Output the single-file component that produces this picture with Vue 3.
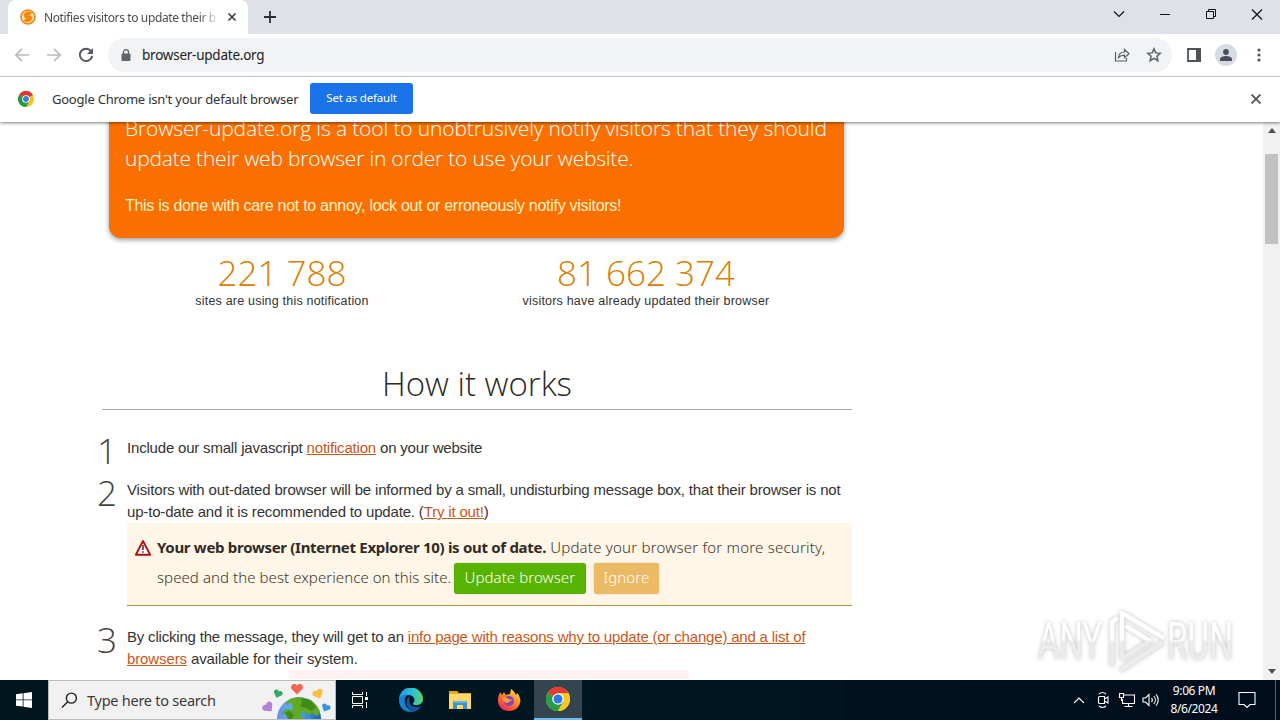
<template>
  <div class="screen">
    <header class="tabstrip">
      <div class="tab">
        <svg class="favicon" viewBox="0 0 16 16">
          <circle cx="8" cy="8" r="7" fill="#ffe9c2" stroke="#f28a1c" stroke-width="1.7" />
          <path d="M11.500 3.800L10 5.600H7.500l-.6 1 3.600.3 1.500 1.800-1.500 3-3.300.9-3-.8L5.700 10h2.700l.5-.8-3.600-.4L4 6.500l1.400-2.700 2.700-.9z" fill="#fb8200" stroke="#fb8200" stroke-width="1" />
        </svg>
        <span class="tab-title">Notifies visitors to update their b</span>
        <svg class="tab-close" viewBox="0 0 10 10"><path d="M1.500 1.500l7 7M8.500 1.500l-7 7" stroke="#3c4043" stroke-width="1.700" /></svg>
      </div>
      <svg class="new-tab" viewBox="0 0 12 12"><path d="M6 0v12M0 6h12" stroke="#2c2f33" stroke-width="1.800" /></svg>
      <div class="window-controls">
        <svg viewBox="0 0 46 28"><path d="M18 11.500l5 5 5-5" /></svg>
        <svg viewBox="0 0 46 28"><path d="M18 14.500h10" /></svg>
        <svg viewBox="0 0 46 28"><path d="M18.500 11.500h7v7h-7zM20.500 11.500v-2h7v7h-2" /></svg>
        <svg viewBox="0 0 46 28"><path d="M18 9.500l10 10M28 9.500l-10 10" /></svg>
      </div>
    </header>

    <div class="toolbar">
      <svg class="nav" viewBox="0 0 16 16"><path d="M15 8H2M8 1.800L1.800 8 8 14.200" stroke="#babcbe" /></svg>
      <svg class="nav" viewBox="0 0 16 16"><path d="M1 8h13M8 1.800L14.200 8 8 14.200" stroke="#babcbe" /></svg>
      <svg class="nav" viewBox="0 0 16 16"><path d="M13.300 4.500A6.200 6.200 0 1 0 14.200 9" stroke="#55585c" stroke-width="2" /><path d="M15 1v6H9z" fill="#55585c" /></svg>
      <div class="omnibox">
        <svg class="lock" viewBox="0 0 10 12"><path d="M2.500 5V3.200a2.500 2.500 0 0 1 5 0V5" fill="none" stroke="#5f6368" stroke-width="1.300" /><rect x="0.500" y="4.500" width="9" height="7.500" rx="1" fill="#5f6368" /></svg>
        <span class="url">browser-update.org</span>
        <svg class="share" viewBox="0 0 16 16"><path d="M1.500 5v9h11v-3M4.500 10.500c.3-3.500 2.500-5.500 6-5.500V2.500L15 6.700l-4.500 4V8.200c-2.700 0-4.500.6-6 2.300z" /></svg>
        <svg class="star" viewBox="0 0 16 16"><path d="M8 1.800l1.800 4.100 4.500.4-3.400 3 1 4.400L8 11.400l-3.900 2.300 1-4.400-3.400-3 4.500-.4z" /></svg>
      </div>
      <svg class="side-panel" viewBox="0 0 14 14"><path d="M1 1h12v12H1z" fill="none" stroke="#505458" stroke-width="1.800" /><path d="M9 0h5v14H9z" fill="#505458" /></svg>
      <span class="profile">
        <svg viewBox="0 0 12 12"><circle cx="6" cy="3" r="2.900" /><path d="M0 12v-2c0-2 3.500-3 6-3s6 1 6 3v2z" /></svg>
      </span>
      <svg class="more" viewBox="0 0 4 14"><circle cx="2" cy="2" r="1.600" /><circle cx="2" cy="7" r="1.600" /><circle cx="2" cy="12" r="1.600" /></svg>
    </div>

    <div class="infobar">
      <svg class="chrome-small" viewBox="0 0 24 24">
        <circle cx="12" cy="12" r="12" fill="#fbc116" />
        <path d="M12 12L1.600 6A12 12 0 0 1 22.400 6z" fill="#d93b30" />
        <path d="M1.600 6A12 12 0 0 0 12 24l5.200-9L12 12z" fill="#229b48" />
        <circle cx="12" cy="12" r="5.800" fill="#fff" /><circle cx="12" cy="12" r="4.400" fill="#3b7de9" />
      </svg>
      <span class="infobar-text">Google Chrome isn't your default browser</span>
      <button class="default-button">Set as default</button>
      <svg class="infobar-close" viewBox="0 0 10 10"><path d="M.5.5l9 9M9.500.5l-9 9" stroke="#505458" stroke-width="1.800" /></svg>
    </div>

    <div class="viewport">
      <main class="page">
        <section class="hero">
          <p class="lead">
            <span class="lead-first">Browser-update.org is a tool to unobtrusively notify visitors that they should</span><br>
            <span class="lead-second">update their web browser in order to use your website.</span>
          </p>
          <p class="care">This is done with care not to annoy, lock out or erroneously notify visitors!</p>
        </section>

        <section class="stats">
          <div v-for="stat in stats" :key="stat.label" class="stat">
            <div class="stat-number">{{ stat.value }}</div>
            <div class="stat-label">{{ stat.label }}</div>
          </div>
        </section>

        <h2>How it works</h2>

        <ol class="steps">
          <li class="step-one">
            <span class="step-number">1</span>
            <div class="s1">Include our small javascript <a>notification</a> on your website</div>
          </li>
          <li class="step-two">
            <span class="step-number">2</span>
            <div>
              <span class="s2">Visitors with out-dated browser will be informed by a small, undisturbing message box, that their browser is not</span><br>
              <span class="s2">up-to-date and it is recommended to update. (<a>Try it out!</a>)</span>
              <div class="notice">
                <svg class="warning" viewBox="0 0 16 16"><path d="M8 1L15.200 14.700H.8z" fill="#fff" stroke="#b80d0d" stroke-width="1.900" stroke-linejoin="round" /><path d="M8 5v5M8 11.200v1.600" stroke="#333" stroke-width="1.500" /></svg>
                <div class="notice-text">
                  <div class="notice-line"><b>Your web browser (Internet Explorer 10) is out of date.</b><span class="n1"> Update your browser for more security,</span></div>
                  <div class="notice-line"><span class="n2">speed and the best experience on this site.</span><button class="update">Update browser</button><button class="ignore">Ignore</button></div>
                </div>
              </div>
            </div>
          </li>
          <li class="step-three">
            <span class="step-number">3</span>
            <div>
              <span class="s3a">By clicking the message, they will get to an <a>info page with reasons why to update (or change) and a list of</a></span><br>
              <span class="s3b"><a>browsers</a> available for their system.</span>
              <div class="preview"></div>
            </div>
          </li>
        </ol>
      </main>
      <div class="scrollbar">
        <svg viewBox="0 0 8 5"><path d="M0 5l4-5 4 5z" /></svg>
        <div class="thumb"></div>
        <svg viewBox="0 0 8 5"><path d="M0 0l4 5 4-5z" /></svg>
      </div>
      <svg class="watermark" viewBox="0 0 210 76">
        <defs>
          <linearGradient id="fade" gradientUnits="userSpaceOnUse" x1="0" y1="10" x2="0" y2="68">
            <stop offset="0" stop-color="#fff" />
            <stop offset=".48" stop-color="#fdfdfd" />
            <stop offset=".52" stop-color="#ebebeb" />
            <stop offset="1" stop-color="#ececec" />
          </linearGradient>
        </defs>
        <g class="mark">
          <text x="8" y="57" textLength="64" lengthAdjust="spacingAndGlyphs">ANY</text>
          <text x="137" y="57" textLength="66" lengthAdjust="spacingAndGlyphs">RUN</text>
          <path d="M82 62V20l4-3M92 54V11l40 24M92 67l40-26M93 56l27-17-23-14" />
        </g>
      </svg>
    </div>

    <footer class="taskbar">
      <div class="start">
        <svg viewBox="0 0 16 16"><path d="M0 2.300L6.700 1.300v6.200H0zM7.500 1.200L16 0v7.500H7.500zM0 8.300h6.700v6.300L0 13.700zM7.500 8.300H16V16l-8.500-1.300z" fill="#fff" /></svg>
      </div>
      <div class="search">
        <svg class="magnifier" viewBox="0 0 18 18"><circle cx="11" cy="6.500" r="5.300" /><path d="M7.200 10.300L1 16.500" /></svg>
        <span>Type here to search</span>
        <svg class="earth" viewBox="0 0 72 38">
          <defs>
            <linearGradient id="sea" x1="0" x2="1"><stop offset="0" stop-color="#6a8ff0" /><stop offset=".4" stop-color="#5db4ee" /><stop offset="1" stop-color="#1763b5" /></linearGradient>
          </defs>
          <circle cx="38" cy="38" r="22" fill="url(#sea)" />
          <path d="M25 22l4-4 8-2 5 1 8 2 6 6 3 8-3 2-5-3-4 2-5-4-3 4 4 4H28l-3-5-5 1c1-3 3-5 6-6l5 1 1-4-3-3-4 2z" fill="#62a925" />
          <path d="M40 17l9 2 6 7-4 4-6-3-6-2 2-4zM24 31l5-1 4 4-2 4h-4z" fill="#3f8c19" />
          <path transform="translate(36 7.500)" d="M0 6L-5.500.5C-7.500-3-2.500-6.500 0-2.800 2.500-6.500 7.500-3 5.500.5z" fill="#ed684e" />
          <path transform="translate(17 12.500) rotate(20) scale(.75)" d="M0 6L-5.500.5C-7.500-3-2.500-6.500 0-2.800 2.500-6.500 7.500-3 5.500.5z" fill="#32aa61" />
          <path transform="translate(57 12.500) rotate(-25) scale(.9)" d="M0 6L-5.500.5C-7.500-3-2.500-6.500 0-2.800 2.500-6.500 7.500-3 5.500.5z" fill="#fbbd3c" />
          <path transform="translate(7 26) rotate(-40) scale(.95)" d="M0 6L-5.500.5C-7.500-3-2.500-6.500 0-2.800 2.500-6.500 7.500-3 5.500.5z" fill="#ae84d3" />
          <path transform="translate(65 26.500) rotate(25) scale(.75)" d="M0 6L-5.500.5C-7.500-3-2.500-6.500 0-2.800 2.500-6.500 7.500-3 5.500.5z" fill="#3495dc" />
        </svg>
      </div>
      <div class="apps">
        <div class="app">
          <svg class="task-view" viewBox="0 0 18 18"><path d="M1.500 1v2.500h10V1M1.500 17v-2.500h10V17M1.500 5.500h10v7h-10zM15.500 1v4M15.500 11v6" /><path d="M14 6h3v3h-3z" class="solid" /></svg>
        </div>
        <div class="app">
          <svg viewBox="0 0 24 24">
            <defs><linearGradient id="edge" x1="0" x2="1"><stop offset="0" stop-color="#1d9ce5" /><stop offset=".6" stop-color="#2bc3d2" /><stop offset="1" stop-color="#63d65c" /></linearGradient></defs>
            <path d="M0 12A12 12 0 0 1 24 11c0 4-3 6-7 6-3 0-4-1-2-3 2-4-2-7-6-7-5 0-8 3-9 5z" fill="url(#edge)" />
            <path d="M0 12c1-4 5-6 9-5-4 2-4 7-2 11 2 3 6 6 9 5C8 26 0 21 0 12z" fill="#1383d8" />
            <path d="M9.500 9C5 14 9 22 15 23.500c3-.5 6-3 7.500-5.500-6 3-13 0-12-6 .1-1 .3-2-1-3z" fill="#0c59a4" />
          </svg>
        </div>
        <div class="app">
          <svg viewBox="0 0 24 24"><path d="M1 3h8l2 2h12v16H1z" fill="#e8a823" /><path d="M1 6h22v15H1z" fill="#ffd86b" /><path d="M5 13h14v8h-4v-4H9v4H5z" fill="#3b93d3" /><path d="M5 13h14v2H5z" fill="#64b4e8" /></svg>
        </div>
        <div class="app">
          <svg viewBox="0 0 24 24">
            <defs><linearGradient id="fox" x1=".9" y1="0" x2=".2" y2="1"><stop offset="0" stop-color="#ffe64a" /><stop offset=".45" stop-color="#ff8b20" /><stop offset="1" stop-color="#f2205e" /></linearGradient></defs>
            <path d="M2 7l1-3 2 3 2-3 2 3c2-1 3-1 4-1l1-5c3 2 4 4 5 6l1-2c3 3 4 7 3 10-1 5-6 8-11 8C5 23 1 18 1 13c0-2 0-4 1-6z" fill="url(#fox)" />
            <circle cx="12" cy="13" r="5" fill="#7944ce" /><path d="M5 10c3-1 5 0 7 1l4 1c-2 1-4 1-5 3-3 0-5-2-6-5z" fill="#ff9b24" />
          </svg>
        </div>
        <div class="app active">
          <svg viewBox="0 0 24 24">
            <circle cx="12" cy="12" r="12" fill="#fcc626" />
            <path d="M12 12L1.600 6A12 12 0 0 1 22.400 6z" fill="#e33b2e" />
            <path d="M1.600 6A12 12 0 0 0 12 24l5.200-9L12 12z" fill="#299c4b" />
            <path d="M12 6h10.400A12 12 0 0 1 12 24l5.200-9z" fill="#fcc626" />
            <circle cx="12" cy="12" r="5.800" fill="#fff" /><circle cx="12" cy="12" r="4.500" fill="#2e7ae5" />
          </svg>
        </div>
      </div>
      <div class="tray">
        <svg class="caret" viewBox="0 0 12 7"><path d="M1 6l5-5 5 5" /></svg>
        <svg class="camera" viewBox="0 0 14 18"><path d="M3.500 5.500h5v7h-5a1 1 0 0 1-1-1v-5a1 1 0 0 1 1-1zM8.500 8l3.500-2v6l-3.500-2M3 3a5.500 5.500 0 0 1 7 0M3 15a5.500 5.500 0 0 0 7 0" /></svg>
        <svg class="network" viewBox="0 0 18 16"><path d="M6 3h10.500v8.500h-12V7M10.500 11.500V14M6.500 14.500h8M1.500 1.500h4v4h-4zM3.500 5.500V9" /></svg>
        <svg class="volume" viewBox="0 0 18 14"><path d="M1 5h2.500L7 1.500v11L3.500 9H1zM9.500 5a3 3 0 0 1 0 4M11.800 3a6 6 0 0 1 0 8M14 1.300a8.500 8.500 0 0 1 0 11.400" /></svg>
        <div class="clock"><div>9:06 PM</div><div>8/6/2024</div></div>
        <svg class="action" viewBox="0 0 18 18"><path d="M1 1.500h16v12h-5l-3 3-3-3H1z" /></svg>
        <span class="peek"></span>
      </div>
    </footer>
  </div>
</template>

<script setup>
const stats = [
  { value: '221 788', label: 'sites are using this notification' },
  { value: '81 662 374', label: 'visitors have already updated their browser' }
]
</script>

<style>
body {
  margin: 0;
  overflow: hidden;
}
</style>

<style scoped>
.screen {
  width: 1280px;
  height: 720px;
  display: flex;
  flex-direction: column;
  overflow: hidden;
  background: #fff;
  font-family: "Noto Sans", "Open Sans", sans-serif;
  white-space: nowrap;
}

.screen * {
  box-sizing: border-box;
}

svg {
  flex: none;
  display: block;
}

button {
  border: 0;
  padding: 0;
  font-family: inherit;
}

/* Browser chrome */
.tabstrip {
  height: 34px;
  flex: none;
  display: flex;
  background: #dee1e8;
}

.tab {
  width: 240px;
  height: 34px;
  margin-left: 8px;
  padding: 0 11px 0 12px;
  display: flex;
  align-items: center;
  background: #fff;
  border-radius: 8px 8px 0 0;
}

.favicon {
  width: 16px;
  height: 16px;
}

.tab-title {
  width: 172px;
  margin-left: 8px;
  overflow: hidden;
  color: #4a4d52;
  font-size: 12px;
  letter-spacing: -0.38px;
  mask-image: linear-gradient(90deg, #000 155px, transparent 176px);
}

.tab-close {
  width: 10px;
  height: 10px;
  margin-left: 11px;
}

.new-tab {
  width: 12px;
  height: 12px;
  margin: 11px 0 0 16px;
}

.window-controls {
  display: flex;
  margin-left: auto;
}

.window-controls svg {
  width: 46px;
  height: 28px;
  fill: none;
  stroke: #111;
}

.window-controls svg:first-child,
.window-controls svg:last-child {
  stroke-width: 1.2;
}

.toolbar {
  height: 43px;
  flex: none;
  display: flex;
  align-items: center;
  padding: 0 19.5px 0 14px;
  border-bottom: 1px solid #d9dadc;
}

.nav {
  width: 16px;
  height: 16px;
  margin-right: 16px;
  fill: none;
  stroke-width: 1.7;
}

.omnibox {
  width: 1064px;
  height: 34px;
  margin-left: -2px;
  padding: 0 10px 0 13px;
  display: flex;
  align-items: center;
  border-radius: 17px;
  background: #f1f3f4;
}

.lock {
  width: 10px;
  height: 12px;
}

.url {
  margin-left: 11px;
  color: #202124;
  font-size: 13.5px;
  letter-spacing: -0.24px;
}

.share,
.star {
  width: 16px;
  height: 16px;
  fill: none;
  stroke: #5b5f64;
  stroke-width: 1.2;
}

.share {
  margin-left: auto;
}

.star {
  margin-left: 16px;
  stroke-width: 1.5;
}

.side-panel {
  width: 14px;
  height: 14px;
  margin-left: 15px;
}

.profile {
  width: 22px;
  height: 22px;
  margin-left: 14px;
  display: grid;
  place-items: center;
  border-radius: 50%;
  background: #d8dce5;
}

.profile svg {
  width: 12px;
  height: 12px;
  fill: #4a4e5c;
}

.more {
  width: 4px;
  height: 14px;
  margin-left: auto;
  fill: #4d5156;
}

.infobar {
  height: 45px;
  flex: none;
  display: flex;
  align-items: center;
  padding: 0 19px 2px 18px;
  position: relative;
  z-index: 2;
  background: #fff;
  box-shadow: 0 1px 3px rgba(0, 0, 0, 0.5);
}

.chrome-small {
  width: 16px;
  height: 16px;
}

.infobar-text {
  width: 246px;
  margin-left: 18px;
  color: #303236;
  font-size: 13px;
  letter-spacing: -0.23px;
}

.default-button {
  width: 103px;
  height: 31px;
  margin-left: 12px;
  padding-bottom: 2px;
  border-radius: 3px;
  background: #1a73e8;
  color: #fff;
  font-size: 11.5px;
  letter-spacing: -0.2px;
}

.infobar-close {
  width: 10px;
  height: 10px;
  margin-left: auto;
}

/* Web page */
.viewport {
  height: 558px;
  flex: none;
  display: flex;
  position: relative;
  overflow: hidden;
}

.page {
  width: 1263px;
  padding-left: 102px;
  color: #333;
  font-family: "Liberation Sans", Arial, sans-serif;
}

.hero {
  width: 735px;
  height: 136px;
  margin: -20px 0 0 7px;
  padding: 11px 16px 0;
  border-radius: 0 0 12px 12px;
  background: #fa7000;
  box-shadow: 0 2px 5px rgba(0, 0, 0, 0.4);
  color: #fff;
}

.lead {
  margin: 0;
  font: 350 21px/30px "Open Sans", sans-serif;
}

.lead-first {
  letter-spacing: -0.14px;
}

.lead-second {
  letter-spacing: -0.21px;
}

.care {
  margin: 22px 0 0;
  color: #fff0c8;
  font-size: 16px;
  line-height: 22px;
  letter-spacing: -0.285px;
}

.stats {
  display: flex;
  margin-left: -2px;
  padding-top: 11px;
  text-align: center;
}

.stat {
  width: 364px;
}

.stat-number {
  height: 44px;
  color: #d98000;
  font: 300 35px/48px "Open Sans", sans-serif;
}

.stat-label {
  color: #333;
  font-size: 12.5px;
  line-height: 16px;
  letter-spacing: 0.2px;
}

h2 {
  width: 750px;
  height: 50px;
  margin: 51px 0 0;
  border-bottom: 1px solid #aaa;
  color: #2b2b2b;
  font: 300 33px/47px "Open Sans", sans-serif;
  text-align: center;
}

.steps {
  margin: 27px 0 0 -5px;
  padding: 0;
  list-style: none;
  font-size: 15px;
  line-height: 22px;
}

.steps li {
  display: flex;
}

.steps a {
  color: #c7581a;
  text-decoration: underline;
}

.step-number {
  width: 30px;
  height: 22px;
  flex: none;
  color: #444;
  font: 300 35px/28px "Open Sans", sans-serif;
}

.step-one {
  height: 42px;
}

.s1,
.s3a {
  letter-spacing: -0.19px;
}

.s2 {
  letter-spacing: -0.17px;
}

.s3b {
  letter-spacing: -0.12px;
}

.notice {
  width: 725px;
  height: 83px;
  display: flex;
  padding: 9px 0 0 8px;
  border-bottom: 1px solid #a5983f;
  background: #fff6e7;
  color: #3c352b;
  font-family: "Noto Sans", sans-serif;
  font-size: 15px;
}

.warning {
  width: 16px;
  height: 16px;
  margin: 8px 6px 0 0;
}

.notice-line {
  height: 30px;
  display: flex;
  align-items: center;
  white-space: pre;
}

.notice b {
  color: #302b26;
  letter-spacing: -0.3px;
}

.n1,
.n2 {
  font-weight: 300;
}

.n1 {
  letter-spacing: 0.21px;
}

.n2 {
  letter-spacing: 0.07px;
}

.notice button {
  height: 31px;
  margin: 2px 0 0 3px;
  padding: 0 1px 2px 0;
  border-radius: 3px;
  box-shadow: 0 0 2px rgba(0, 0, 0, 0.2);
  color: #fff;
  font-size: 15px;
  font-weight: 300;
  letter-spacing: 0.08px;
}

.notice .update {
  width: 132px;
  background: #57b300;
}

.notice .ignore {
  width: 65px;
  margin-left: 8px;
  background: #ecb964;
}

.step-three {
  padding-top: 20px;
}

.preview {
  width: 400px;
  height: 9px;
  margin: 0 0 0 162px;
  background: #fff2f0;
}

.scrollbar {
  width: 17px;
  display: flex;
  flex-direction: column;
  align-items: center;
  padding: 6px 0;
  background: #f1f1f1;
}

.scrollbar svg {
  width: 8px;
  height: 5px;
  fill: #505050;
}

.thumb {
  width: 13px;
  height: 90px;
  margin: 21px 0 auto;
  background: #c1c1c1;
}

.watermark {
  position: absolute;
  left: 1030px;
  top: 480px;
  width: 210px;
  height: 76px;
}

.mark {
  filter: drop-shadow(0 0 2px rgba(0, 0, 0, 0.25));
}

.mark text {
  fill: url(#fade);
  font: 400 52px Roboto, sans-serif;
}

.mark path {
  fill: none;
  stroke: url(#fade);
  stroke-width: 4.5;
  stroke-linecap: round;
  stroke-linejoin: round;
}

/* Windows taskbar */
.taskbar {
  height: 40px;
  flex: none;
  display: flex;
  background: linear-gradient(90deg, #00161f, #001620 55%, #000c1c);
  color: #fff;
}

.start {
  width: 48px;
  display: grid;
  place-items: center;
}

.start svg {
  width: 16px;
  height: 16px;
}

.search {
  width: 288px;
  display: flex;
  align-items: center;
  padding-left: 12px;
  border: 1px solid #b9b9b9;
  background: #f1f1f1;
  color: #393939;
  font-size: 14.5px;
  letter-spacing: -0.25px;
}

.magnifier {
  width: 17px;
  height: 17px;
  margin-right: 9px;
  fill: none;
  stroke: #222;
  stroke-width: 1.5;
}

.earth {
  width: 72px;
  height: 38px;
  margin-left: auto;
  margin-right: 2px;
}

.apps {
  display: flex;
}

.app {
  width: 48px;
  margin-right: 1px;
  display: grid;
  place-items: center;
}

.app:first-child {
  margin-right: 3px;
}

.app svg {
  width: 24px;
  height: 24px;
}

.app .task-view {
  width: 18px;
  height: 18px;
  fill: none;
  stroke: #fff;
}

.task-view .solid {
  fill: #fff;
  stroke: none;
}

.active {
  background: #34454f;
  border-bottom: 2px solid #76b9ed;
}

.tray {
  margin-left: auto;
  display: flex;
  align-items: center;
}

.tray svg {
  fill: none;
  stroke: #fff;
  stroke-width: 1.1;
}

.caret {
  width: 12px;
  height: 7px;
  margin-right: 11px;
}

.camera {
  width: 14px;
  height: 18px;
  margin-right: 8px;
}

.network {
  width: 18px;
  height: 16px;
  margin-right: 6px;
}

.volume {
  width: 18px;
  height: 14px;
}

.clock {
  width: 70px;
  padding-right: 2px;
  font-size: 12px;
  line-height: 18px;
  letter-spacing: -0.4px;
  text-align: center;
}

.tray .action {
  width: 18px;
  height: 18px;
  margin-left: 8px;
}

.peek {
  width: 1px;
  height: 40px;
  margin: 0 4px 0 19px;
  background: #536070;
}
</style>
